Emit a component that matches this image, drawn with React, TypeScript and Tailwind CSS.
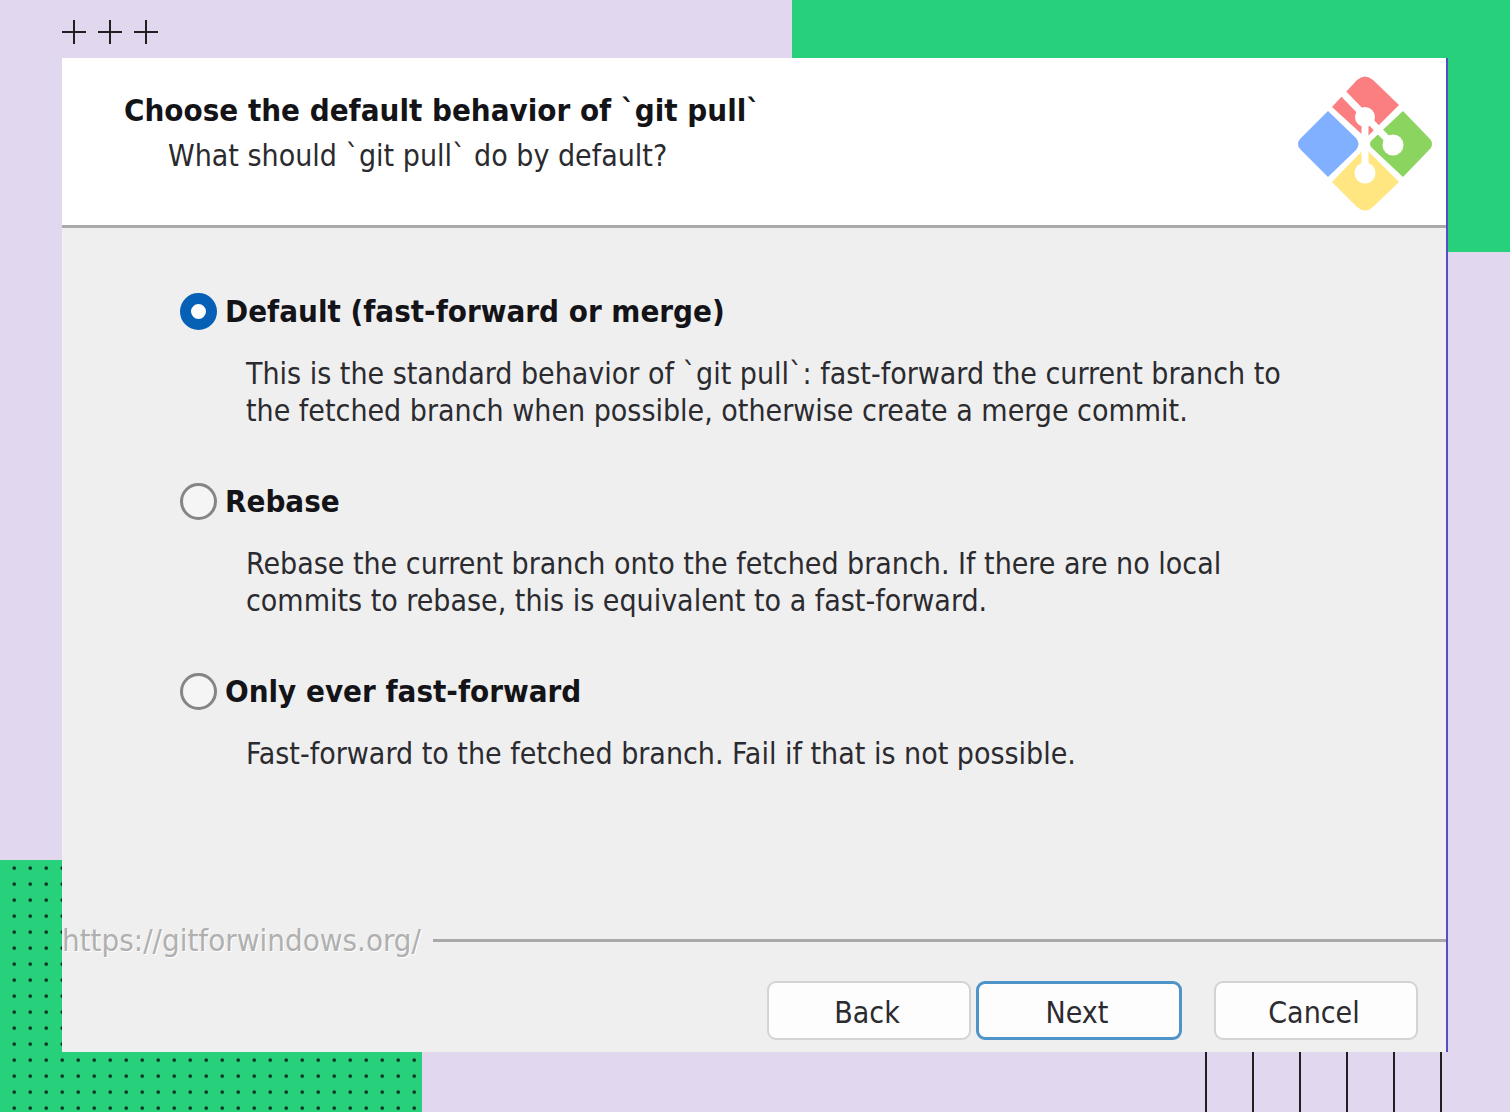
import { useState } from "react";

type PullOption = {
    id: string;
    title: string;
    description: string[];
};

const pullOptions: PullOption[] = [
    {
        id: "merge",
        title: "Default (fast-forward or merge)",
        description: [
            "This is the standard behavior of `git pull`: fast-forward the current branch to",
            "the fetched branch when possible, otherwise create a merge commit.",
        ],
    },
    {
        id: "rebase",
        title: "Rebase",
        description: [
            "Rebase the current branch onto the fetched branch. If there are no local",
            "commits to rebase, this is equivalent to a fast-forward.",
        ],
    },
    {
        id: "ff-only",
        title: "Only ever fast-forward",
        description: [
            "Fast-forward to the fetched branch. Fail if that is not possible.",
        ],
    },
];

const PlusMarks = () => (
    <svg width="96" height="24" stroke="#231f20" strokeWidth="2" aria-hidden>
        <path d="M0 12h24M12 0v24M36 12h24M48 0v24M72 12h24M84 0v24" />
    </svg>
);

const DotGrid = () => (
    <svg className="absolute bottom-0 left-0 w-[422px] h-63 bg-[#27d17c]" aria-hidden>
        <defs>
            <pattern id="dots" width="16" height="16" patternUnits="userSpaceOnUse">
                <rect x="12.6" y="6.6" width="3.2" height="3.2" rx="0.8" fill="#12301f" />
            </pattern>
        </defs>
        <rect width="100%" height="100%" fill="url(#dots)" />
    </svg>
);

const Bars = () => (
    <svg
        className="absolute bottom-0 right-[68px]"
        width="237"
        height="60"
        stroke="#231f20"
        strokeWidth="2"
        aria-hidden
    >
        <path d="M1 0v60M48 0v60M95 0v60M142 0v60M189 0v60M236 0v60" />
    </svg>
);

const GitLogo = () => (
    <svg width="136" height="136" viewBox="0 0 136 136" className="shrink-0" aria-hidden>
        <path fill="#fb7e80" d="M59 4Q67 -3 75 4L101 29L68 62L34 31Z" />
        <path fill="#80b0ff" d="M30 35L58 62Q63 68 58 74L30 101L2 73Q-2 68 2 63Z" />
        <path fill="#8cd460" d="M105 35L132 63Q136 68 132 73L105 101L73 71Q71 68 73 65Z" />
        <path fill="#ffe680" d="M67 72L101 106L75 131Q67 138 59 131L34 106Z" />
        <g stroke="#fff" strokeWidth="7" fill="none">
            <path d="M38 10L67 40L95 69" />
            <path d="M67 40V98" />
        </g>
        <g fill="#fff">
            <circle cx="67" cy="41" r="10" />
            <circle cx="95" cy="69" r="10.5" />
            <circle cx="67" cy="97" r="10.5" />
        </g>
    </svg>
);

const App = () => {
    const [selected, setSelected] = useState("merge");

    return (
        <div className="relative min-h-screen flex flex-col bg-[#e1d8ef] px-[62px] pb-15 font-['DejaVu_Sans_Condensed','DejaVu_Sans',sans-serif] text-[30px] leading-[37px] text-[#2b2b2f]">
            <div className="absolute top-0 right-0 w-[718px] h-63 bg-[#27d17c]" />
            <DotGrid />
            <Bars />
            <div className="relative pt-5 pb-[14px]">
                <PlusMarks />
            </div>
            <main className="relative flex-1 flex flex-col bg-[#efefef] border-r-2 border-[#5450c4]">
                <header className="flex justify-between items-start bg-white border-b-3 border-[#a9a9a9] pl-[62px] pr-3 pt-[18px] pb-[13px]">
                    <div className="pt-4">
                        <h1 className="text-[31px] font-bold text-[#141418]">
                            Choose the default behavior of `git pull`
                        </h1>
                        <p className="pl-11 pt-2">
                            What should `git pull` do by default?
                        </p>
                    </div>
                    <GitLogo />
                </header>
                <form className="flex-1 flex flex-col">
                    <fieldset className="flex-1 flex flex-col gap-[54px] pl-[118px] pt-[65px]">
                        {pullOptions.map((option) => (
                            <div key={option.id}>
                                <label className="flex items-center gap-2 text-[31px] font-bold text-[#141418]">
                                    <input
                                        type="radio"
                                        name="pull"
                                        value={option.id}
                                        checked={selected === option.id}
                                        onChange={() => setSelected(option.id)}
                                        className="appearance-none size-[37px] rounded-full border-3 border-[#858585] bg-[#f5f5f5] checked:border-[11px] checked:border-[#0560b6] checked:bg-white"
                                    />
                                    {option.title}
                                </label>
                                <p className="pl-[66px] pt-[25px]">
                                    {option.description.map((line) => (
                                        <span key={line} className="block">
                                            {line}
                                        </span>
                                    ))}
                                </p>
                            </div>
                        ))}
                    </fieldset>
                    <div className="flex items-center gap-3">
                        <a
                            href="https://gitforwindows.org/"
                            className="text-[31px] text-[#b0b0b0] [text-shadow:1px_1px_0_#fff]"
                        >
                            https://gitforwindows.org/
                        </a>
                        <div className="flex-1 h-[3px] bg-[#a9a9a9]" />
                    </div>
                    <div className="flex justify-end pt-[22px] pr-7 pb-3">
                        <button
                            type="button"
                            className="w-51 h-[59px] pt-1 pr-1 rounded-[9px] border-2 border-[#d3d3d3] bg-[#fdfdfd]"
                        >
                            Back
                        </button>
                        <button
                            type="submit"
                            className="w-[206px] h-[59px] pt-1 pr-1 ml-[5px] rounded-[9px] border-3 border-[#4f94c8] bg-[#fdfdfd]"
                        >
                            Next
                        </button>
                        <button
                            type="button"
                            className="w-51 h-[59px] pt-1 pr-1 ml-8 rounded-[9px] border-2 border-[#d3d3d3] bg-[#fdfdfd]"
                        >
                            Cancel
                        </button>
                    </div>
                </form>
            </main>
        </div>
    );
};

export default App;
